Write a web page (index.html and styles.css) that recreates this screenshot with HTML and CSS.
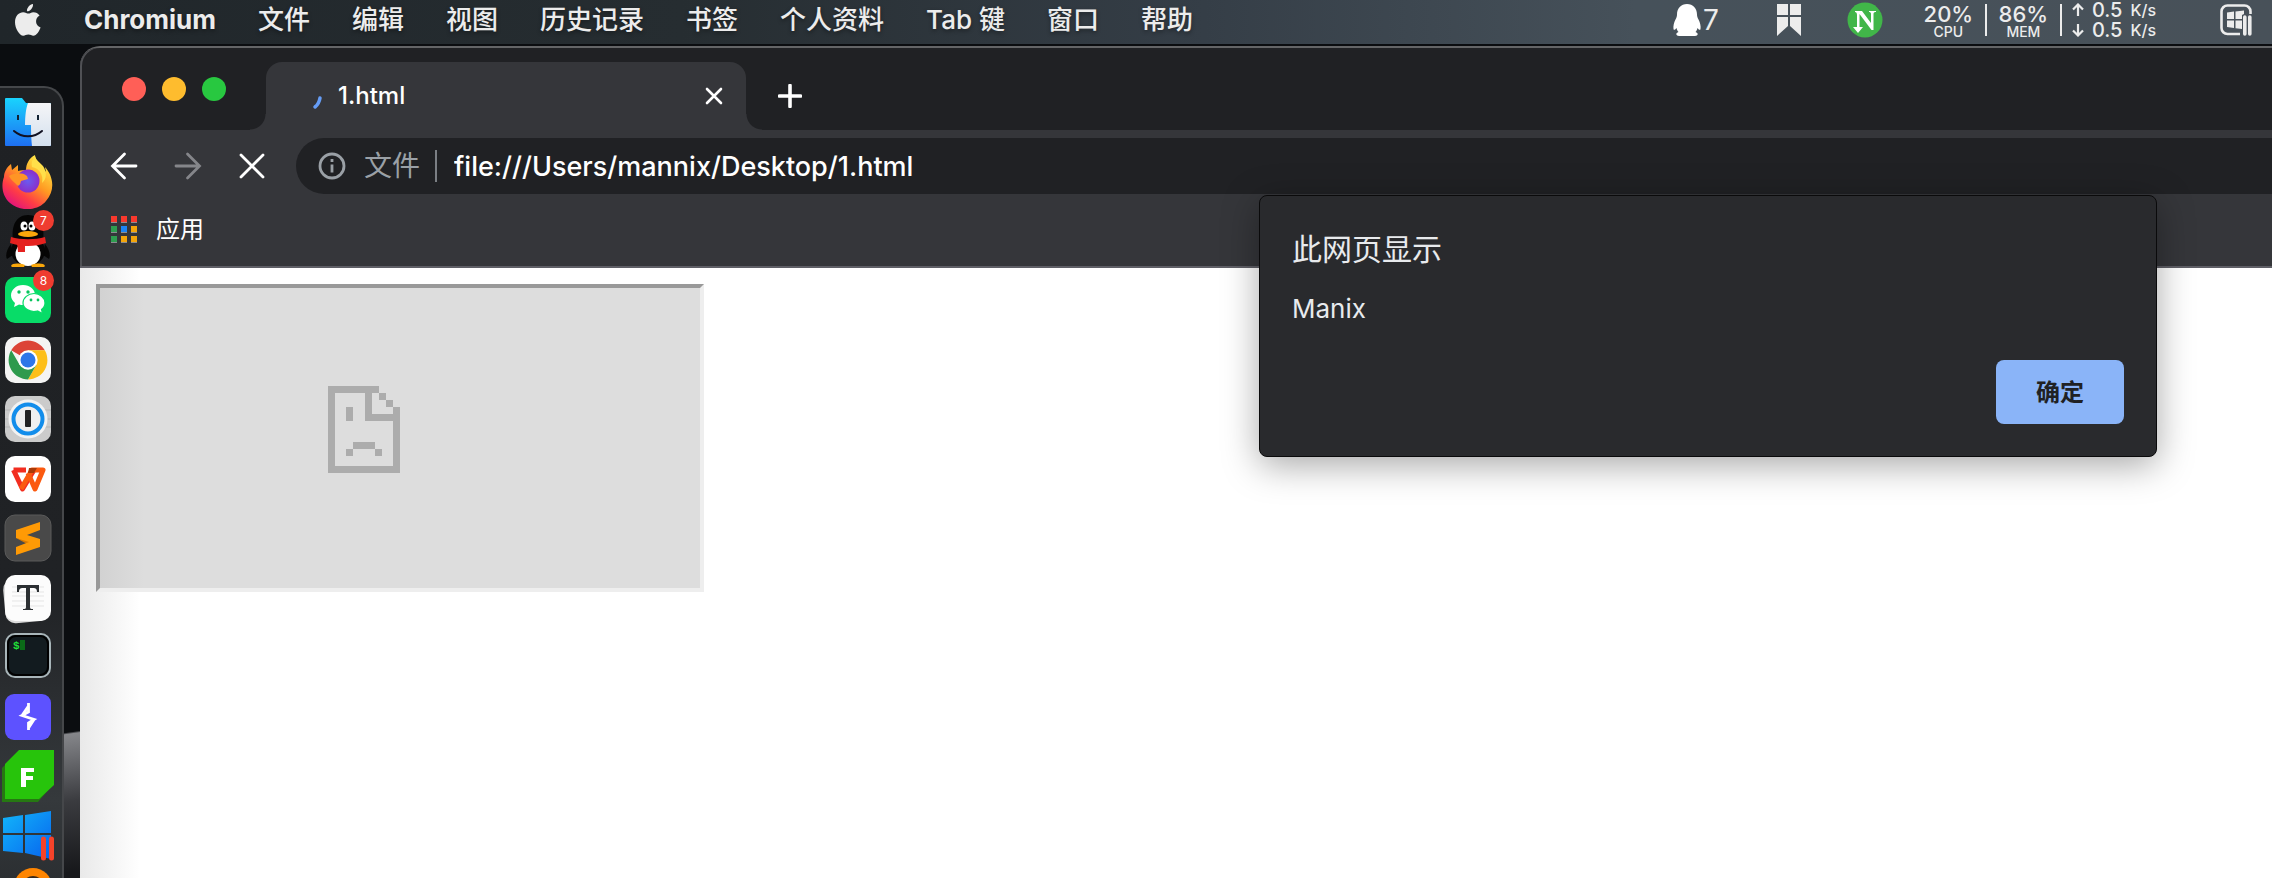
FILE: index.html
```html
<!DOCTYPE html>
<html lang="zh-CN">
<head>
<meta charset="utf-8">
<title>1.html</title>
<meta name="viewport" content="width=device-width, initial-scale=1">
<link rel="stylesheet" href="styles.css">
</head>
<body>
<header class="menubar">
  <nav class="menus" aria-label="应用菜单">
    <button class="menu apple" aria-label="Apple">
      <svg width="28" height="32" viewBox="0 0 28 32" fill="#ececec"><path d="M19 0c.4 3.600-2.700 7.400-6 7.300C12.600 4 15.800.4 19 0zM19.300 8.200c2.700 0 4.900 1.200 6.300 3.300-5.200 3-4.400 10 1 12.100-1.300 3.500-4 8.200-7.200 8.200-2 0-2.600-1.200-5-1.200s-3.200 1.200-5.100 1.200C5.500 31.800 1 24.500 1 18.300 1 11.800 5 8.200 9.200 8.200c2.200 0 3.900 1.400 5.300 1.400 1.300 0 2.900-1.400 4.800-1.400z"/></svg>
    </button>
    <button class="menu app-name">Chromium</button>
    <button class="menu">文件</button>
    <button class="menu">编辑</button>
    <button class="menu">视图</button>
    <button class="menu">历史记录</button>
    <button class="menu">书签</button>
    <button class="menu">个人资料</button>
    <button class="menu">Tab 键</button>
    <button class="menu">窗口</button>
    <button class="menu">帮助</button>
  </nav>
  <div class="status">
    <div class="status-qq">
      <svg width="28" height="32" viewBox="0 0 28 32" fill="#fff"><path d="M14 0c6 0 10 4.500 10 10.500 0 2 .5 3 1.500 5C27 18.500 28 22 27.500 25c-.3 1.500-1.500 1-3-1-.4 1.600-1 3-2 4 1.500.6 2.200 1.300 2.200 2.200 0 1.300-2 1.800-5 1.800H8.300c-3 0-5-.5-5-1.800 0-.9.700-1.600 2.200-2.200-1-1-1.600-2.400-2-4-1.500 2-2.700 2.500-3 1C0 22 1 18.500 2.500 15.500c1-2 1.500-3 1.500-5C4 4.500 8 0 14 0z"/></svg>
      <span>7</span>
    </div>
    <svg width="24" height="32" viewBox="0 0 24 32" fill="#ececec"><path d="M0 0h11v11H0zM13 0h11v11H13zM0 13h11v9L0 32zM13 13h11v19L13 22z"/></svg>
    <div class="status-n">
      <svg width="36" height="36" viewBox="0 0 36 36"><circle cx="18" cy="18" r="17.500" fill="#41b649"/><path d="M8 9h7l9 12v-9c0-1.500-1-2-2-2V9h7v1c-1.500 0-2.500.5-2.500 2v16h-2L12.500 12v13h3.500l-5 6-5-6h4V13c0-2-.8-3-2-3z" fill="#fff"/></svg>
    </div>
    <div class="meters">
      <div class="meter"><span class="meter-value">20%</span><span class="meter-label">CPU</span></div>
      <div class="meter"><span class="meter-value">86%</span><span class="meter-label">MEM</span></div>
      <div class="net">
        <div class="rate"><svg width="12" height="14" viewBox="0 0 12 14"><path d="M6 13V2M1 6.500l5-5 5 5" fill="none" stroke="#ececec" stroke-width="2.200"/></svg><span>0.5</span><small>K/s</small></div>
        <div class="rate"><svg width="12" height="14" viewBox="0 0 12 14"><path d="M6 1v11M1 7.500l5 5 5-5" fill="none" stroke="#ececec" stroke-width="2.200"/></svg><span>0.5</span><small>K/s</small></div>
      </div>
    </div>
    <svg width="32" height="32" viewBox="0 0 32 32" fill="none" stroke="#ececec"><path d="M20 30H7.500a6 6 0 0 1-6-6V7.500a6 6 0 0 1 6-6h17a6 6 0 0 1 6 6V10" stroke-width="2.600"/><path d="M7 8.500 14 7.500V15H7zM15.500 7.500 24 6.500V10l-2 1v4h-6.500zM7 16.500h7V24l-7-1zM15.500 16.500H22V25l-6.500-.8z" fill="#ececec" stroke="none"/><path d="M24.800 13v17M29.800 13v17" stroke-width="3.600" stroke-linecap="round"/></svg>
  </div>
</header>

<div class="desktop">
  <aside class="dock" aria-label="程序坞">
    <div class="dock-panel">
      <button class="dock-item" aria-label="访达">
        <svg width="56" height="56" viewBox="0 0 56 56"><defs><linearGradient id="fa" x2="0" y2="1"><stop stop-color="#19d3fd"/><stop offset="1" stop-color="#1e6ff2"/></linearGradient><linearGradient id="fb" x2="0" y2="1"><stop stop-color="#f5f5f7"/><stop offset="1" stop-color="#d3e0ee"/></linearGradient></defs><path d="M5 5q0-1 1-1h16l4 5h24q1 0 1 1v41q0 1-1 1H6q-1 0-1-1z" fill="url(#fa)"/><path d="M28 9h22q1 0 1 1v41q0 1-1 1H32q-1-8-1-21h-6c0-9 1-17 3-22z" fill="url(#fb)"/><path d="M18 21v5M38 21v5" stroke="#123" stroke-width="2"/><path d="M14 37c8 7 20 7 28 0" fill="none" stroke="#112" stroke-width="2" stroke-linecap="round"/></svg>
      </button>
      <button class="dock-item" aria-label="Firefox">
        <svg width="56" height="56" viewBox="0 0 56 56"><defs><linearGradient id="ff" x1=".9" y1=".1" x2=".3" y2="1"><stop stop-color="#fff14a"/><stop offset=".45" stop-color="#ff9a22"/><stop offset=".75" stop-color="#ff3d45"/><stop offset="1" stop-color="#e3157a"/></linearGradient><radialGradient id="fp"><stop stop-color="#6a5bf0"/><stop offset="1" stop-color="#8a2fc9"/></radialGradient></defs><path d="M4 24c0-5 3-10 7-13l1 6 6-5v6c3-1 6-1 8-1 0-6 3-12 9-15 0 6 4 8 7 12l4 5-1-5c9 10 10 24 1 34-8 10-26 11-36 2C2 43 1 32 4 24z" fill="url(#ff)"/><circle cx="28" cy="28" r="11.500" fill="url(#fp)"/><path d="M9 23c5-3 13-4 18 0l1 3-7 2c-1 3 0 3-3 5-4-4-7-6-9-10z" fill="#ff9525"/><path d="M32 14c7 1 12 8 10 16 5-4 5-11 1-17-4-4-7-6-8-10-3 4-4 7-3 11z" fill="#ffe04a"/></svg>
      </button>
      <button class="dock-item" aria-label="QQ">
        <svg width="56" height="56" viewBox="0 0 56 56"><path d="M11 31c-4 5-6 11-4 15l6-4zM45 31c4 5 6 11 4 15l-6-4z" fill="#050505"/><ellipse cx="28" cy="38" rx="17" ry="15" fill="#050505"/><path d="M13 27c-2-14 3-25 15-25s17 11 15 25z" fill="#050505"/><ellipse cx="28" cy="41" rx="12.500" ry="12" fill="#fff"/><path d="M11 24c10 3 24 3 34 0l1 6c-11 4-25 4-36 0zM17 30h8v9h-7z" fill="#e5211f"/><ellipse cx="24" cy="13" rx="3.500" ry="4.500" fill="#fff"/><ellipse cx="32" cy="13" rx="3.500" ry="4.500" fill="#fff"/><circle cx="25" cy="13" r="1.500"/><circle cx="31" cy="13" r="1.500"/><ellipse cx="28" cy="21" rx="10" ry="3" fill="#faa70a"/><path d="M11 53c1-3 8-3 14-1l-1 2H12zM45 53c-1-3-8-3-14-1l1 2h12z" fill="#faa70a"/></svg>
        <span class="badge">7</span>
      </button>
      <button class="dock-item" aria-label="微信">
        <svg width="56" height="56" viewBox="0 0 56 56"><rect x="5" y="5" width="46" height="46" rx="10" fill="#08dc68"/><path d="M23 13c-7 0-12 5-12 10.500 0 3 2 6 4 7.500l-1 4 5-2.500c1.500.5 3 .5 4 .5 7 0 12-4.500 12-10S30 13 23 13z" fill="#fff"/><path d="M34 21.500c6 0 11 4.500 11 9.500 0 3-1.500 5-3.500 6.500l1 4-5-2.500c-8 2-14.500-3-14.500-8s5-9.500 11-9.500z" fill="#fff" stroke="#08dc68" stroke-width="1.200"/><g fill="#08c45c"><circle cx="19" cy="20" r="1.700"/><circle cx="28" cy="20" r="1.700"/><circle cx="31" cy="28" r="1.400"/><circle cx="38" cy="28" r="1.400"/></g></svg>
        <span class="badge">8</span>
      </button>
      <button class="dock-item" aria-label="Chrome">
        <svg width="56" height="56" viewBox="0 0 56 56"><rect x="5" y="5" width="46" height="46" rx="10" fill="#f4f4f3"/><path d="M28 28 11.200 18.300A19.400 19.400 0 0 1 44.800 18.300H28z" fill="#dc4437"/><path d="M28 18.300h16.800A19.400 19.400 0 0 1 28 47.400l8.400-14.600z" fill="#fdbf18"/><path d="M11.200 18.300A19.400 19.400 0 0 0 28 47.400l8.400-14.600H19.600z" fill="#2e9a4d"/><circle cx="28" cy="28" r="9.700" fill="#fff"/><circle cx="28" cy="28" r="7.500" fill="#2e76e8"/></svg>
      </button>
      <button class="dock-item" aria-label="1Password">
        <svg width="56" height="56" viewBox="0 0 56 56"><rect x="5" y="5" width="46" height="46" rx="10" fill="#cbcbcb"/><path d="M5 19h46M5 28h46M5 36h46" stroke="#b5b5b5"/><circle cx="28" cy="28" r="19.500" fill="#f2f2f2"/><circle cx="28" cy="28" r="14.500" fill="#efefef" stroke="#128deb" stroke-width="4"/><rect x="25" y="19" width="6" height="17" rx="1" fill="#222"/></svg>
      </button>
      <button class="dock-item" aria-label="WPS">
        <svg width="56" height="56" viewBox="0 0 56 56"><rect x="5" y="5" width="46" height="46" rx="10" fill="#fff"/><path d="M13.500 19H26M13.500 19l9 19 11.500-19" fill="none" stroke="#f22d20" stroke-width="5" stroke-linejoin="round"/><path d="m28 22 7 16 8-19H32L21 38" fill="none" stroke="#fb5a10" stroke-width="5" stroke-linejoin="round"/><path d="M29 17h8l-3 5h-6z" fill="#a83a08"/></svg>
      </button>
      <button class="dock-item" aria-label="Sublime Text">
        <svg width="56" height="56" viewBox="0 0 56 56"><rect x="5" y="5" width="46" height="46" rx="10" fill="#494949" stroke="#5b5b5b"/><path d="m16 28 24 4v2l-11 1z" fill="#d97900"/><path d="m16 20 24-8v8l-13 5 13 4v8l-24 8v-8l13-5-13-4z" fill="#ff9a05"/></svg>
      </button>
      <button class="dock-item" aria-label="Typora">
        <svg width="56" height="56" viewBox="0 0 56 56"><rect x="4" y="8" width="44" height="44" rx="10" fill="#dcdcdc" transform="rotate(-5 28 28)"/><rect x="5" y="5" width="46" height="46" rx="10" fill="#fcfcfc"/><path d="M12 17h32M12 22h32M12 26h32M12 31h32M12 36h32" stroke="#e5e5e5"/><path d="M17 15h22v7h-2c0-3-1-4-4-4h-3v19c0 2 1 2 3 2v1H23v-1c2 0 3 0 3-2V18h-3c-3 0-4 1-4 4h-2z" fill="#2c3033"/></svg>
      </button>
      <button class="dock-item" aria-label="终端">
        <svg width="56" height="56" viewBox="0 0 56 56"><rect x="6" y="5" width="44" height="43" rx="9" fill="#121b1f" stroke="#a8b5b9" stroke-width="2"/><rect x="8" y="7" width="40" height="39" rx="8" fill="none" stroke="#000" stroke-width="2"/><text x="13" y="20" class="prompt">$</text><rect x="20" y="11" width="5" height="10" fill="#0b6b18"/></svg>
      </button>
      <button class="dock-item" aria-label="Burp Suite">
        <svg width="56" height="56" viewBox="0 0 56 56"><rect x="5" y="5" width="46" height="46" rx="9" fill="#5d52ff"/><path d="M28.500 14v9L22 26.500l12 4-5.500 3.500v7M28.500 17 22 26.500M34 30.500 28.500 39" fill="none" stroke="#fff" stroke-width="2.800"/></svg>
      </button>
      <button class="dock-item" aria-label="FinalShell">
        <svg width="56" height="56" viewBox="0 0 56 56"><path d="M2 20 16 6l34 34-12 14H2z" fill="#267812"/><path d="M19 2h35v35L39 51H5V16z" fill="#27c40b"/><path d="M21 20h13v4h-8v4h7v4h-7v7h-5z" fill="#fff"/></svg>
      </button>
      <button class="dock-item" aria-label="Parallels Desktop">
        <svg width="56" height="56" viewBox="0 0 56 56"><defs><linearGradient id="win" x2="1" y2="1"><stop stop-color="#12b6fa"/><stop offset="1" stop-color="#0763ee"/></linearGradient></defs><path d="m3 10 20-3v18H3zM25 7l26-4v22H25zM3 27h20v18L3 43zM25 27h26v24l-26-6z" fill="url(#win)"/><path d="M43.500 31v19M51.500 31v19" stroke="#f5432a" stroke-width="5" stroke-linecap="round"/></svg>
      </button>
      <button class="dock-item" aria-label="Browser">
        <svg width="56" height="56" viewBox="0 0 56 56"><circle cx="33" cy="20" r="19" fill="#ff8500"/><circle cx="33" cy="20" r="11" fill="#3b2a1b"/></svg>
      </button>
    </div>
  </aside>

  <main class="window">
    <div class="tabstrip">
      <div class="lights">
        <button class="light light-close" aria-label="关闭"></button>
        <button class="light light-min" aria-label="最小化"></button>
        <button class="light light-max" aria-label="缩放"></button>
      </div>
      <div class="tab">
        <svg width="32" height="32" viewBox="0 0 32 32"><path d="M22 18q-1 6-5 9" fill="none" stroke="#669df6" stroke-width="3.500" stroke-linecap="round"/></svg>
        <span class="tab-title">1.html</span>
        <button class="icon-button" aria-label="关闭标签页"><svg width="18" height="18" viewBox="0 0 18 18"><path d="m2 2 14 14M16 2 2 16" stroke="#fff" stroke-width="2.600" stroke-linecap="round"/></svg></button>
      </div>
      <button class="icon-button new-tab" aria-label="新标签页"><svg width="24" height="24" viewBox="0 0 24 24"><path d="M12 1.500v21M1.500 12h21" stroke="#fff" stroke-width="3.600" stroke-linecap="round"/></svg></button>
    </div>
    <div class="toolbar">
      <div class="nav">
        <button class="icon-button" aria-label="后退"><svg width="28" height="28" viewBox="0 0 28 28"><path d="M26 14H3M14.500 2 2.500 14l12 12" fill="none" stroke="#fff" stroke-width="2.800" stroke-linecap="round"/></svg></button>
        <button class="icon-button" aria-label="前进"><svg width="28" height="28" viewBox="0 0 28 28"><path d="M2 14h23M13.500 2l12 12-12 12" fill="none" stroke="#85868a" stroke-width="2.800" stroke-linecap="round"/></svg></button>
        <button class="icon-button" aria-label="停止"><svg width="28" height="28" viewBox="0 0 28 28"><path d="m3 3 22 22M25 3 3 25" stroke="#fff" stroke-width="2.800" stroke-linecap="round"/></svg></button>
      </div>
      <div class="omnibox">
        <svg width="28" height="28" viewBox="0 0 28 28"><circle cx="14" cy="14" r="12" fill="none" stroke="#9aa0a6" stroke-width="2.800"/><path d="M14 12.500v8M14 7v3" stroke="#9aa0a6" stroke-width="2.800"/></svg>
        <label class="scheme" for="url">文件</label>
        <input class="url" id="url" type="text" value="file:///Users/mannix/Desktop/1.html" spellcheck="false">
      </div>
    </div>
    <div class="bookmarks">
      <a class="bookmark" href="#apps">
        <svg width="26" height="27" viewBox="0 0 26 27"><path d="M0 6h6v1H0zM10 6h6v1h-6zM20 6h6v1h-6zM0 16h6v1H0zM10 16h6v1h-6zM20 16h6v1h-6zM0 26h6v1H0zM10 26h6v1h-6zM20 26h6v1h-6z" fill="#8b8c90"/><path d="M0 0h6v6H0zM10 0h6v6h-6zM20 0h6v6h-6z" fill="#f8392d"/><path d="M0 10h6v6H0zM0 20h6v6H0z" fill="#2f9e50"/><path d="M10 10h6v6h-6z" fill="#1b84f4"/><path d="M20 10h6v6h-6zM10 20h6v6h-6zM20 20h6v6h-6z" fill="#f4a50a"/></svg>
        <span>应用</span>
      </a>
    </div>
    <section class="page">
      <div class="frame">
        <svg width="72" height="87" viewBox="0 0 72 87" fill="#acacac" shape-rendering="crispEdges"><path d="M0 0h51v7H44v21h21v7H37V7H7v73h58V21h7v66H0zM51 7h7v7h-7zM58 14h7v7h-7zM18 21h7v14h-7zM25 56h22v7H25zM18 63h7v7h-7zM47 63h7v7h-7z"/></svg>
      </div>
    </section>
    <div class="dialog" role="dialog" aria-labelledby="dialog-title">
      <h1 class="dialog-title" id="dialog-title">此网页显示</h1>
      <p class="dialog-text">Manix</p>
      <button class="ok">确定</button>
    </div>
  </main>
</div>
</body>
</html>
```
FILE: styles.css
```css
* {
  box-sizing: border-box;
}

body {
  display: flex;
  flex-direction: column;
  height: 100vh;
  margin: 0;
  overflow: hidden;
  background: #0b0d10;
  color: #fff;
  font-family: Inter, "Noto Sans CJK SC", sans-serif;
  font-size: 24px;
}

button {
  padding: 0;
  border: 0;
  background: none;
  color: inherit;
  font: inherit;
}

svg {
  display: block;
  flex: none;
}

/* Menu bar */
.menubar {
  display: flex;
  flex: none;
  align-items: center;
  justify-content: space-between;
  height: 44px;
  padding: 0 20px 4px 14px;
  background: linear-gradient(90deg, #20262a 0%, #262d31 30%, #353e47 53%, #46515a 72%, #485159 100%);
  color: #ececec;
}

.menus {
  display: flex;
  align-items: center;
  gap: 42px;
}

.menu {
  font-size: 26px;
  font-weight: 500;
  line-height: 36px;
  white-space: nowrap;
  text-shadow: 0 2px 4px rgba(0, 0, 0, .4);
}

.app-name {
  font-weight: 700;
}

.status {
  display: flex;
  align-items: center;
}

.status-qq {
  display: flex;
  align-items: center;
  gap: 2px;
  margin-right: 58px;
  font-size: 28px;
  line-height: 32px;
}

.status-n {
  margin: 0 29px 0 46px;
}

.meters {
  display: flex;
  align-items: center;
  margin-right: 64px;
}

.meter {
  display: flex;
  flex-direction: column;
  align-items: center;
  width: 75px;
  height: 32px;
  border-right: 2px solid #ececec;
  font-weight: 500;
}

.meter-value {
  font-size: 22px;
  line-height: 20px;
}

.meter-label {
  font-size: 14px;
  line-height: 16px;
}

.net {
  padding-left: 10px;
  font-weight: 500;
}

.rate {
  display: flex;
  align-items: center;
  gap: 8px;
  font-size: 20px;
  line-height: 20px;
}

.rate small {
  font-size: 16px;
}

/* Desktop and dock */
.desktop {
  display: flex;
  flex: 1;
  gap: 16px;
  min-height: 0;
  padding-top: 2px;
  overflow: hidden;
  background: linear-gradient(172deg, transparent 0 691px, #85868a 693px, #3a3b3f 760px, #17181b 830px) 0 0 / 80px 100% no-repeat;
}

.dock {
  flex: none;
  width: 64px;
  padding-top: 40px;
}

.dock-panel {
  display: grid;
  grid-template-rows: repeat(14, 1fr);
  height: 839px;
  padding-top: 4px;
  border: solid #45474a;
  border-width: 2px 2px 0 0;
  border-radius: 0 20px 0 0;
  background: linear-gradient(#1f2124 0%, #202225 60%, #35393c 85%, #26292c 100%);
}

.dock-item {
  position: relative;
  display: flex;
  align-items: center;
  width: 56px;
}

.badge {
  position: absolute;
  top: -1px;
  left: 33px;
  width: 21px;
  height: 21px;
  border-radius: 50%;
  background: #ef3c30;
  font-size: 12px;
  line-height: 21px;
  text-align: center;
}

.prompt {
  fill: #21e03a;
  font: bold 11px "Liberation Mono", monospace;
}

/* Browser window */
.window {
  position: relative;
  display: flex;
  flex: 1;
  flex-direction: column;
  min-width: 0;
  border-top: 2px solid #646567;
  border-radius: 20px 0 0 0;
  background: #35363a;
  box-shadow: inset 2px 0 #505155;
}

.tabstrip {
  display: flex;
  align-items: flex-end;
  height: 82px;
  border-radius: 18px 0 0 0;
  background: #202124;
  box-shadow: inset 2px 0 #505155;
}

.lights {
  display: flex;
  gap: 16px;
  align-self: center;
  width: 186px;
  padding-left: 42px;
}

.light {
  width: 24px;
  height: 24px;
  border-radius: 50%;
}

.light-close {
  background: #ff5f57;
}

.light-min {
  background: #febc2e;
}

.light-max {
  background: #28c840;
}

.tab {
  position: relative;
  display: flex;
  align-items: center;
  width: 480px;
  height: 68px;
  padding: 0 23px 0 32px;
  border-radius: 16px 16px 0 0;
  background: #35363a;
}

/* Flared feet on both sides of the active tab */
.tab::before,
.tab::after {
  position: absolute;
  bottom: 0;
  width: 16px;
  height: 16px;
  content: "";
}

.tab::before {
  right: 100%;
  background: radial-gradient(circle at 0 0, #202124 15px, #35363a 16px);
}

.tab::after {
  left: 100%;
  background: radial-gradient(circle at 100% 0, #202124 15px, #35363a 16px);
}

.tab-title {
  flex: 1;
  padding-left: 8px;
  font-size: 24px;
  font-weight: 500;
  line-height: 32px;
}

.new-tab {
  align-self: flex-end;
  height: 68px;
  margin-left: 32px;
}

.toolbar {
  display: flex;
  gap: 30px;
  padding: 8px 0 8px 30px;
}

.nav {
  display: flex;
  align-items: center;
  gap: 36px;
}

.omnibox {
  display: flex;
  flex: 1;
  align-items: center;
  height: 56px;
  padding-left: 22px;
  border-radius: 28px 0 0 28px;
  background: #202124;
  font-size: 28px;
}

.scheme {
  margin: 0 15px 0 18px;
  color: #9aa0a6;
  line-height: 32px;
}

.url {
  flex: 1;
  min-width: 0;
  height: 32px;
  padding: 0 0 0 17px;
  border: 0;
  border-left: 2px solid #7b7f84;
  outline: 0;
  background: transparent;
  color: #fff;
  font: inherit;
  font-size: 27px;
  font-weight: 500;
}

.bookmarks {
  display: flex;
  align-items: center;
  height: 66px;
  padding: 0 0 9px 31px;
  border-bottom: 2px solid #5f5f66;
}

.bookmark {
  display: flex;
  align-items: center;
  gap: 19px;
  color: #fff;
  line-height: 32px;
  text-decoration: none;
}

.page {
  flex: 1;
  padding: 16px;
  background: linear-gradient(90deg, #e9e9e9, #fff 60px);
}

.frame {
  display: flex;
  align-items: center;
  justify-content: center;
  width: 608px;
  height: 308px;
  padding: 0 72px 17px 0;
  border: 4px solid;
  border-color: #999 #eee #eee #999;
  background: linear-gradient(90deg, #d2d2d2, #ddd 44px);
}

/* Alert */
.dialog {
  position: absolute;
  top: 147px;
  right: 115px;
  display: flex;
  flex-direction: column;
  width: 898px;
  padding: 33px 32px 32px;
  border: 1px solid #0a0a0b;
  border-radius: 8px;
  background: #292a2d;
  box-shadow: 0 8px 36px rgba(0, 0, 0, .35);
  color: #e8eaed;
}

.dialog-title {
  margin: 0;
  font-size: 30px;
  font-weight: 400;
  line-height: 40px;
}

.dialog-text {
  margin: 20px 0 31px;
  font-size: 26px;
  line-height: 40px;
}

.ok {
  align-self: flex-end;
  width: 128px;
  height: 64px;
  padding-bottom: 4px;
  border-radius: 8px;
  background: #8ab4f8;
  color: #202124;
  font-size: 24px;
  font-weight: 700;
}
```
